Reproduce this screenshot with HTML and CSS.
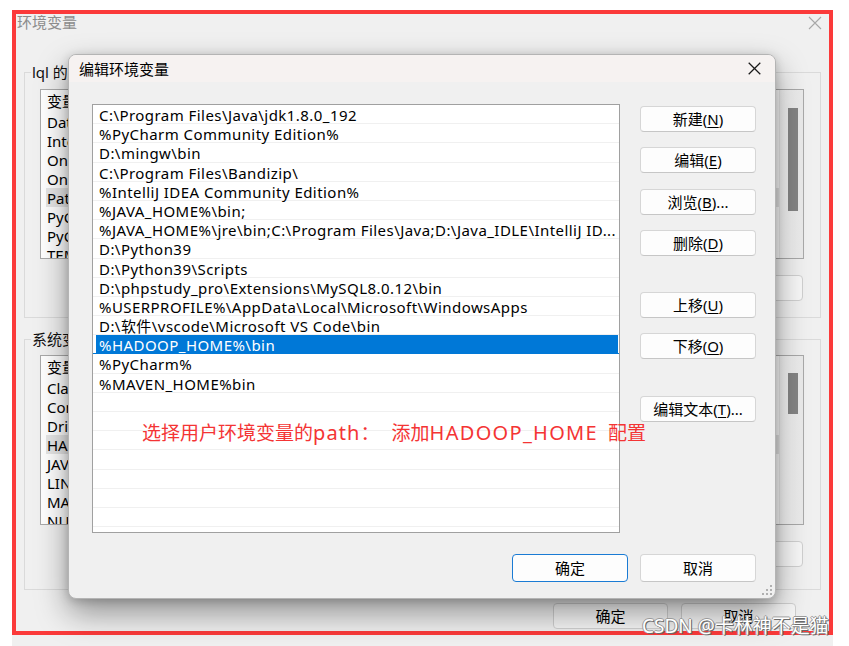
FILE: index.html
```html
<!DOCTYPE html>
<html lang="zh-CN">
<head>
<meta charset="utf-8">
<title>编辑环境变量</title>
<link rel="stylesheet" href="styles.css">
</head>
<body>
<div class="desk">
  <div class="envwin">
    <div class="env-title">
      <span>环境变量</span>
      <svg class="env-x" width="14" height="14" viewBox="0 0 14 14"><path d="M1 1L13 13M13 1L1 13" stroke="#a8a8a8" stroke-width="1.1" fill="none"/></svg>
    </div>
    <div class="grp grp-user">
      <span class="grp-label">lql 的用户变量(U)</span>
      <div class="lv">
        <div class="lv-body">
          <div class="lv-head">变量</div>
          <div class="lv-row">DataGrip</div>
          <div class="lv-row">IntelliJ IDEA Community Edition</div>
          <div class="lv-row">OneDrive</div>
          <div class="lv-row">OneDriveConsumer</div>
          <div class="lv-row lv-hi">Path</div>
          <div class="lv-row">PyCharm</div>
          <div class="lv-row">PyCharm Community Edition</div>
          <div class="lv-row">TEMP</div>
        </div>
        <div class="lv-sb"><div class="lv-thumb t1"></div></div>
      </div>
      <div class="grp-btns"><span class="ebtn">新建(N)...</span><span class="ebtn">编辑(E)...</span><span class="ebtn">删除(D)</span></div>
    </div>
    <div class="grp grp-sys">
      <span class="grp-label">系统变量(S)</span>
      <div class="lv">
        <div class="lv-body">
          <div class="lv-head">变量</div>
          <div class="lv-row">ClassPath</div>
          <div class="lv-row">ComSpec</div>
          <div class="lv-row">DriverData</div>
          <div class="lv-row lv-hi">HADOOP_HOME</div>
          <div class="lv-row">JAVA_HOME</div>
          <div class="lv-row">LINK_HOME</div>
          <div class="lv-row">MAVEN_HOME</div>
          <div class="lv-row">NUMBER_OF_PROCESSORS</div>
        </div>
        <div class="lv-sb"><div class="lv-thumb t2"></div></div>
      </div>
      <div class="grp-btns"><span class="ebtn">新建(W)...</span><span class="ebtn">编辑(I)...</span><span class="ebtn">删除(L)</span></div>
    </div>
    <div class="env-foot"><span class="ebtn">确定</span><span class="ebtn">取消</span></div>
  </div>

  <div class="redframe"></div>

  <div class="modal">
    <div class="m-title">
      <span>编辑环境变量</span>
      <svg width="13" height="13" viewBox="0 0 13 13"><path d="M0.7 0.7L12.3 12.3M12.3 0.7L0.7 12.3" stroke="#1a1a1a" stroke-width="1.25" fill="none"/></svg>
    </div>
    <div class="m-body">
      <div class="m-main">
        <div class="plist">
          <div class="prow">C:\Program Files\Java\jdk1.8.0_192</div>
          <div class="prow">%PyCharm Community Edition%</div>
          <div class="prow">D:\mingw\bin</div>
          <div class="prow">C:\Program Files\Bandizip\</div>
          <div class="prow">%IntelliJ IDEA Community Edition%</div>
          <div class="prow">%JAVA_HOME%\bin;</div>
          <div class="prow">%JAVA_HOME%\jre\bin;C:\Program Files\Java;D:\Java_IDLE\IntelliJ ID...</div>
          <div class="prow">D:\Python39</div>
          <div class="prow">D:\Python39\Scripts</div>
          <div class="prow">D:\phpstudy_pro\Extensions\MySQL8.0.12\bin</div>
          <div class="prow">%USERPROFILE%\AppData\Local\Microsoft\WindowsApps</div>
          <div class="prow">D:\软件\vscode\Microsoft VS Code\bin</div>
          <div class="prow sel">%HADOOP_HOME%\bin</div>
          <div class="prow">%PyCharm%</div>
          <div class="prow">%MAVEN_HOME%bin</div>
          <div class="prow"></div>
          <div class="prow"></div>
          <div class="prow"></div>
          <div class="prow"></div>
          <div class="prow"></div>
          <div class="prow"></div>
          <div class="prow"></div>
        </div>
        <div class="mbtns">
          <span class="mbtn">新建(<u>N</u>)</span>
          <span class="mbtn">编辑(<u>E</u>)</span>
          <span class="mbtn">浏览(<u>B</u>)...</span>
          <span class="mbtn">删除(<u>D</u>)</span>
          <span class="mbtn sp">上移(<u>U</u>)</span>
          <span class="mbtn">下移(<u>O</u>)</span>
          <span class="mbtn sp">编辑文本(<u>T</u>)...</span>
        </div>
      </div>
      <div class="m-foot">
        <span class="mbtn fbtn def">确定</span>
        <span class="mbtn fbtn">取消</span>
      </div>
    </div>
    <svg class="grip" width="10" height="10" viewBox="0 0 10 10"><g fill="#b0b0b0"><rect x="8" y="0" width="2" height="2"/><rect x="4" y="4" width="2" height="2"/><rect x="8" y="4" width="2" height="2"/><rect x="0" y="8" width="2" height="2"/><rect x="4" y="8" width="2" height="2"/><rect x="8" y="8" width="2" height="2"/></g></svg>
  </div>

  <div class="note">选择用户环境变量的<span class="lat">path</span><span class="colon">：</span>添加<span class="lat hd">HADOOP_HOME</span>配置</div>
  <div class="wm">CSDN @卡林神不是猫</div>
</div>
</body>
</html>
```
FILE: styles.css
```css
* { box-sizing: border-box; }

body {
  margin: 0;
  background: #ffffff;
  font-family: "Noto Sans", "Noto Sans CJK SC", sans-serif;
  font-size: 15px;
  color: #000;
}

.desk {
  position: relative;
  width: 849px;
  height: 646px;
  overflow: hidden;
  padding: 10px 0 0 12px;
}

/* background window */
.envwin {
  width: 821px;
  height: 636px;
  background: #f0f0f0;
  display: flex;
  flex-direction: column;
}

.env-title {
  height: 62px;
  display: flex;
  justify-content: space-between;
  align-items: flex-start;
  padding: 1px 11px 0 5px;
  color: #8c8c8c;
  line-height: 22px;
}

.env-x { margin-top: 5px; }

.grp {
  margin: 0 12px;
  border: 1px solid #dadada;
  display: flex;
  flex-direction: column;
}

.grp-user { height: 246px; }
.grp-sys { height: 251px; margin-top: 21px; }

.grp-label {
  align-self: flex-start;
  margin: -11px 0 0 6px;
  padding: 0 1px;
  height: 20px;
  line-height: 20px;
  background: #f0f0f0;
  color: #111;
}

.lv {
  margin: 7px 0 0 15px;
  width: 764px;
  height: 170px;
  border: 1px solid #a9a9a9;
  background: #fff;
  display: flex;
  overflow: hidden;
}

.grp-sys .lv { margin-top: 6px; }

.lv-body { flex: 1; }

.lv-head {
  height: 22px;
  line-height: 22px;
  padding-left: 6px;
}

.lv-row {
  height: 19px;
  line-height: 20px;
  padding-left: 6px;
  white-space: nowrap;
}

.lv-hi { background: #e6e6e6; margin-left: 5px; padding-left: 1px; }

.lv-sb {
  width: 24px;
  border-left: 1px solid #ececec;
  background: linear-gradient(to right, #f4f4f4, #eaeaea);
  position: relative;
}

.lv-thumb {
  position: absolute;
  left: 8px;
  width: 10px;
  background: #858585;
}
.t1 { top: 18px; height: 103px; }
.t2 { top: 17px; height: 41px; }

.grp-btns {
  display: flex;
  justify-content: flex-end;
  gap: 12px;
  margin: 16px 17px 0 0;
}

.ebtn {
  width: 115px;
  height: 26px;
  line-height: 24px;
  text-align: center;
  background: #f7f7f7;
  border: 1px solid #d0d0d0;
  border-radius: 4px;
}

.env-foot {
  display: flex;
  justify-content: flex-end;
  gap: 13px;
  padding-right: 37px;
  margin-top: 13px;
}

.redframe {
  position: absolute;
  left: 12px;
  top: 10px;
  width: 821px;
  height: 625px;
  border: 4px solid #fb3a3a;
}

/* modal dialog */
.modal {
  position: absolute;
  left: 68px;
  top: 54px;
  width: 708px;
  height: 545px;
  background: #f0f0f0;
  border: 1px solid #b4b4b4;
  border-radius: 8px;
  box-shadow: 0 14px 32px rgba(0, 0, 0, 0.4), 0 2px 10px rgba(0, 0, 0, 0.18);
  display: flex;
  flex-direction: column;
  overflow: hidden;
}

.m-title {
  height: 27px;
  flex: none;
  background: #f6f2f1;
  display: flex;
  align-items: center;
  justify-content: space-between;
  padding: 0 14px 0 10px;
}

.m-body {
  padding: 22px 19px 0 23px;
  display: flex;
  flex-direction: column;
}

.m-main {
  display: flex;
  gap: 20px;
}

.plist {
  width: 528px;
  height: 429px;
  border: 1px solid #a0a0a0;
  background: #fff;
  overflow: hidden;
}

.prow {
  height: 19.2px;
  line-height: 21px;
  padding-left: 6px;
  border-bottom: 1px solid #f0f0f0;
  white-space: nowrap;
  letter-spacing: 0.45px;
}

.prow.sel {
  background: linear-gradient(to right, transparent 3px, #0078d7 3px, #0078d7 calc(100% - 1px), transparent calc(100% - 1px));
  color: #fff;
  border-bottom-color: #0078d7;
}

.mbtns {
  width: 116px;
  display: flex;
  flex-direction: column;
  gap: 15.3px;
  padding-top: 2px;
}

.mbtn {
  height: 26px;
  line-height: 24px;
  text-align: center;
  background: #fdfdfd;
  border: 1px solid #d6d6d6;
  border-bottom-color: #c6c6c6;
  border-radius: 4px;
  white-space: nowrap;
}

.mbtn u { text-underline-offset: 2px; }

.mbtn.sp { margin-top: 21px; }

.m-foot {
  display: flex;
  justify-content: flex-end;
  gap: 12px;
  margin-top: 21px;
}

.fbtn {
  width: 116px;
  height: 28px;
  line-height: 26px;
}

.fbtn.def { border-color: #1a7bd4; }

.grip {
  position: absolute;
  right: 3px;
  bottom: 3px;
}

.note {
  position: absolute;
  left: 142px;
  top: 420px;
  font-size: 19px;
  line-height: 26px;
  color: #f43434;
  white-space: nowrap;
}

.note .lat {
  font-size: 20px;
  letter-spacing: 1.1px;
}

.note .hd {
  letter-spacing: 1.3px;
  margin-right: 10px;
}

.note .colon { margin-right: 12px; }

.wm {
  position: absolute;
  left: 642px;
  top: 613px;
  font-size: 19px;
  line-height: 26px;
  color: #fff;
  white-space: nowrap;
  text-shadow: 1px 1px 0 #6a6a6a, -1px 0 0 #9a9a9a, 0 -1px 0 #9a9a9a, 1px 0 0 #8a8a8a;
}
```
